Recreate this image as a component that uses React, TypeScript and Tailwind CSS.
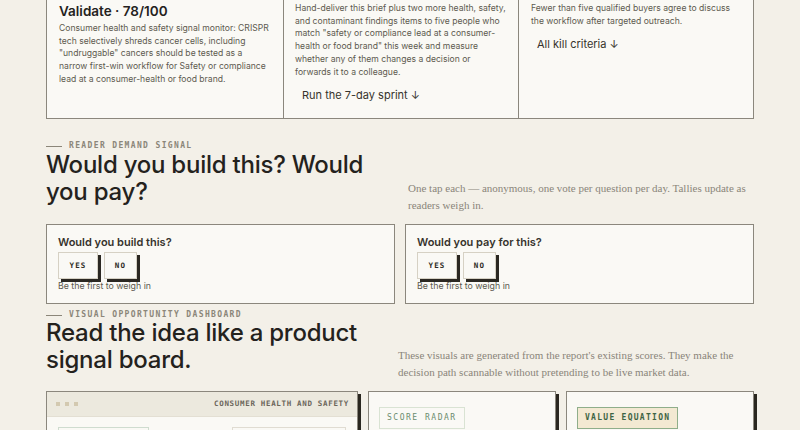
const sans = "font-['Inter',_'Liberation_Sans',_sans-serif]";
const serif = "font-['Liberation_Serif',_serif]";
const mono = "font-['DejaVu_Sans_Mono',_'Liberation_Mono',_monospace]";

function Label({ text }: { text: string }) {
  return (
    <div className={`flex items-center gap-[7px] h-[10px] ${mono} text-[8px] font-bold tracking-[0.17em] text-[#8b8679]`}>
      <span className="block w-[16px] h-px bg-[#8b8679]" />
      <span>{text}</span>
    </div>
  );
}

function VoteButton({ label, width }: { label: string; width: string }) {
  return (
    <button
      className={`${width} h-[27px] bg-[#faf9f5] border border-[#d6d1c4] shadow-[3px_3px_0_#2b2822] ${mono} text-[7.5px] font-bold tracking-[0.15em] text-[#2b2822]`}
    >
      {label}
    </button>
  );
}

function PollCard({ question }: { question: string }) {
  return (
    <div className="border border-[#8b877d] bg-[#faf9f5] px-[11px] pt-[9px] pb-[11px]">
      <h3 className={`${sans} text-[11px] font-semibold text-[#36332c] leading-[16px]`}>{question}</h3>
      <div className="flex gap-[6px] mt-[2px]">
        <VoteButton label="YES" width="w-[40px]" />
        <VoteButton label="NO" width="w-[33px]" />
      </div>
      <p className={`${sans} text-[8.8px] leading-[12px] text-[#5d594f] mt-px`}>Be the first to weigh in</p>
    </div>
  );
}

export default function App() {
  return (
    <div className={`min-h-screen bg-[#f3f0e8] ${sans} overflow-hidden`}>
      <div className="w-[708px] mx-auto">
        {/* Verdict / sprint / kill criteria */}
        <div className="grid grid-cols-[236px_235px_1fr] border-x border-b border-[#8b877d] bg-[#faf9f5] h-[119px]">
          <div className="px-3">
            <h2 className="text-[13.5px] font-semibold leading-[22px] text-[#24221d]">Validate · 78/100</h2>
            <p className="text-[8.6px] leading-[12.7px] text-[#5d594f]">
              Consumer health and safety signal monitor: CRISPR tech selectively shreds cancer cells, including "undruggable" cancers should be tested as a narrow first-win workflow for Safety or compliance lead at a consumer-health or food brand.
            </p>
          </div>
          <div className="border-l border-[#8b877d] pl-[11px] pr-[9px] pt-[2px]">
            <p className="text-[8.6px] leading-[12.7px] text-[#5d594f]">
              Hand-deliver this brief plus two more health, safety, and contaminant findings items to five people who match "safety or compliance lead at a consumer-health or food brand" this week and measure whether any of them changes a decision or forwards it to a colleague.
            </p>
            <a className="inline-block mt-[9px] px-[7px] text-[11px] leading-[16px] text-[#36332c]">Run the 7-day sprint ↓</a>
          </div>
          <div className="border-l border-[#8b877d] pl-3 pr-[8px] pt-[2px]">
            <p className="text-[8.6px] leading-[12.7px] text-[#5d594f]">
              Fewer than five qualified buyers agree to discuss the workflow after targeted outreach.
            </p>
            <a className="inline-block mt-[9px] px-[6px] text-[11px] leading-[16px] text-[#36332c]">All kill criteria ↓</a>
          </div>
        </div>

        {/* Reader demand */}
        <div className="flex justify-between items-end mt-[22px]">
          <div className="w-[345px]">
            <Label text="READER DEMAND SIGNAL" />
            <h2 className="text-[24px] font-medium leading-[27px] tracking-[-0.01em] text-[#24221d] mb-[9px]">
              Would you build this? Would you pay?
            </h2>
          </div>
          <p className={`${serif} w-[346px] text-[11px] leading-[17px] text-[#8a857a]`}>
            One tap each — anonymous, one vote per question per day. Tallies update as readers weigh in.
          </p>
        </div>

        <div className="grid grid-cols-[349px_1fr] gap-[10px] mt-[10px]">
          <PollCard question="Would you build this?" />
          <PollCard question="Would you pay for this?" />
        </div>

        {/* Dashboard */}
        <div className="flex justify-between items-end mt-[6px]">
          <div className="w-[345px]">
            <Label text="VISUAL OPPORTUNITY DASHBOARD" />
            <h2 className="text-[24px] font-medium leading-[26.5px] tracking-[-0.01em] text-[#24221d] mb-[8px]">
              Read the idea like a product signal board.
            </h2>
          </div>
          <p className={`${serif} w-[356px] text-[11px] leading-[17px] text-[#8a857a]`}>
            These visuals are generated from the report's existing scores. They make the decision path scannable without pretending to be live market data.
          </p>
        </div>

        <div className="grid grid-cols-[312px_1fr_1fr] gap-[10px] mt-[10px]">
          <div className="border border-[#8b877d] bg-[#faf9f5] shadow-[3px_3px_0_#2a2720] h-[120px]">
            <div className="flex items-center justify-between h-[25px] pl-[9px] pr-[8px] bg-[#ece9de] border-b border-[#e3dfd3]">
              <div className="flex gap-[5px]">
                <span className="w-[4px] h-[4px] bg-[#d3c9b0]" />
                <span className="w-[4px] h-[4px] bg-[#d3c9b0]" />
                <span className="w-[4px] h-[4px] bg-[#d3c9b0]" />
              </div>
              <span className={`${mono} text-[7.5px] font-bold tracking-[0.09em] text-[#6b665b]`}>CONSUMER HEALTH AND SAFETY</span>
            </div>
            <div className="flex justify-between px-[11px] pt-[10px]">
              <div className="w-[91px] h-[40px] border border-[#cfdccf]" />
              <div className="w-[114px] h-[40px] border border-[#e0dcd2]" />
            </div>
          </div>
          <div className="border border-[#8b877d] bg-[#faf9f5] shadow-[3px_3px_0_#2a2720] h-[120px] px-[10px] pt-[10px]">
            <span className={`inline-flex items-center h-[22px] px-[7px] border border-[#d9e3d3] ${mono} text-[8px] tracking-[0.19em] text-[#6b8c6e]`}>SCORE RADAR</span>
          </div>
          <div className="border border-[#8b877d] bg-[#faf9f5] shadow-[3px_3px_0_#2a2720] h-[120px] px-[10px] pt-[10px]">
            <span className={`inline-flex items-center h-[22px] px-[7px] bg-[#f3e9d2] border border-[#8fae8a] ${mono} text-[8px] font-bold tracking-[0.16em] text-[#3e6444]`}>VALUE EQUATION</span>
          </div>
        </div>
      </div>
    </div>
  );
}
